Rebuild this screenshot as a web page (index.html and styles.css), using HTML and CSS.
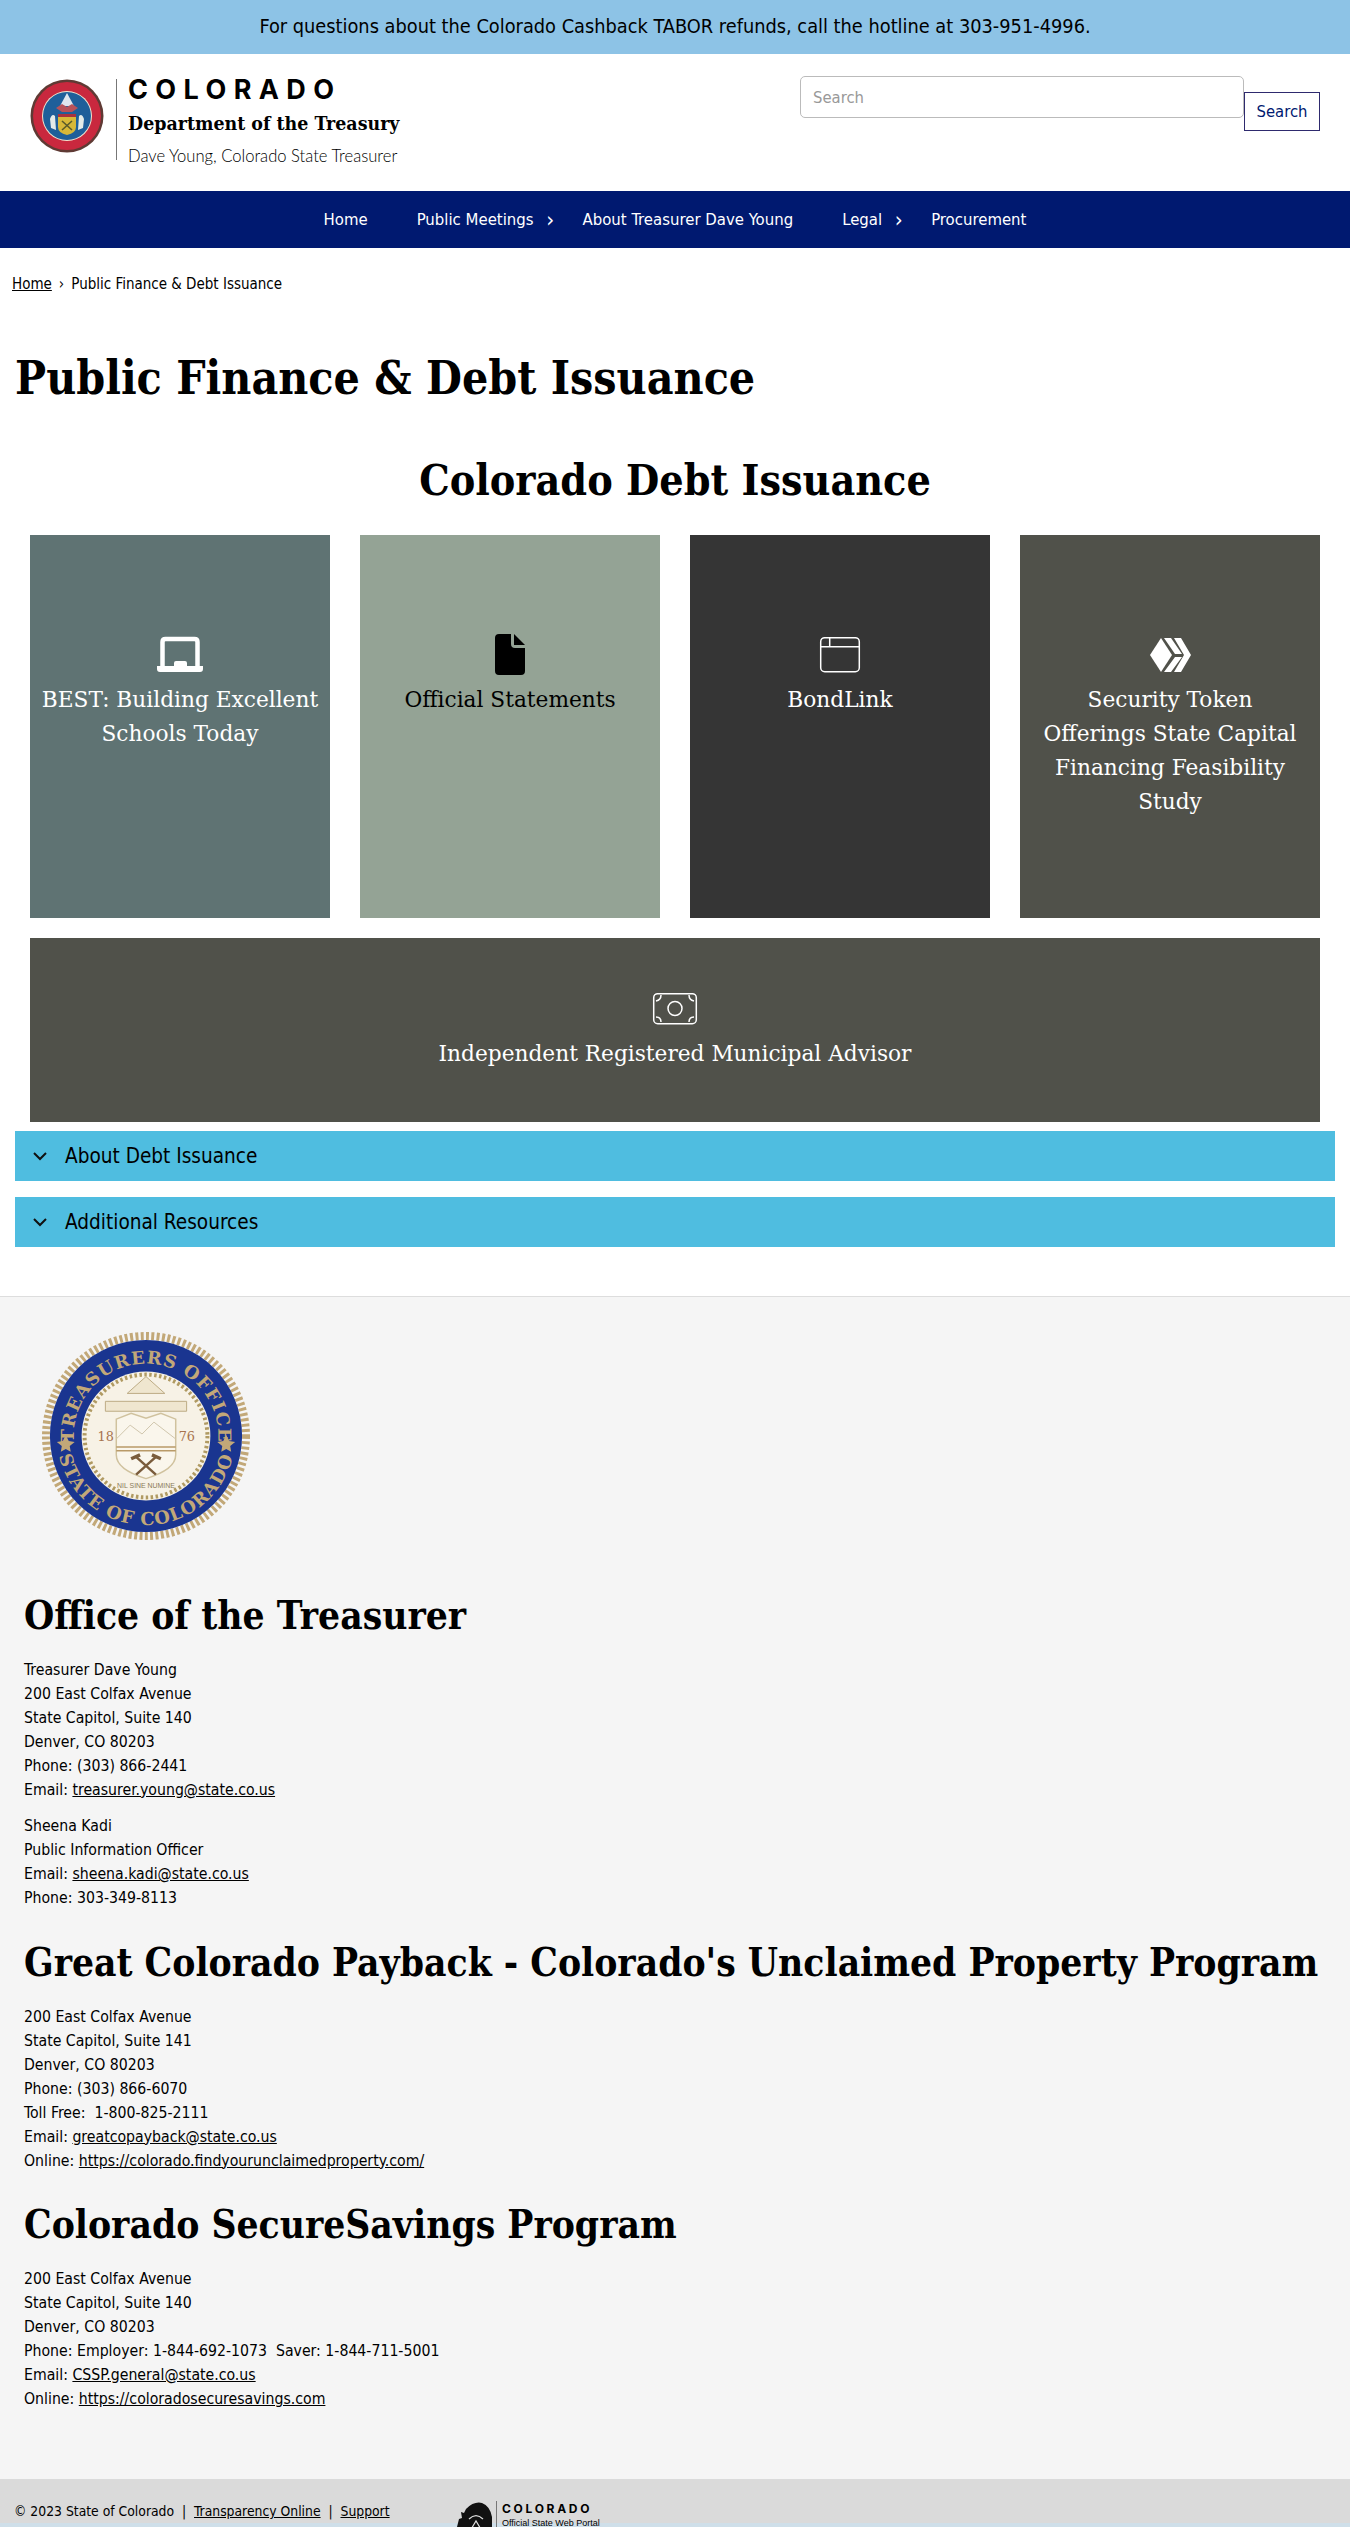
FILE: index.html
```html
<!DOCTYPE html>
<html lang="en">

<head>
    <meta charset="UTF-8">
    <title>Public Finance &amp; Debt Issuance</title>
    <link rel="stylesheet" href="styles.css">
</head>

<body>
    <div class="alert">For questions about the Colorado Cashback TABOR refunds, call the hotline at 303-951-4996.</div>

    <header class="site-header">
        <a class="brand" href="#">
            <svg class="brand-seal" viewBox="0 0 74 74" aria-hidden="true">
                <circle cx="37" cy="37" r="36.5" fill="#5f3a34"/>
                <circle cx="37" cy="37" r="34" fill="#c9283e"/>
                <circle cx="37" cy="37" r="25" fill="#f0e6d0"/>
                <circle cx="37" cy="37" r="24" fill="#1f5f9a"/>
                <path d="M37 14l7 13H30z" fill="#dfe6ee"/>
                <path d="M26 29l6-4 5 3 5-3 6 4-6 4H32z" fill="#b8525a"/>
                <path d="M28 35h18v3H28z" fill="#a8323e"/>
                <path d="M28 38h18v10q0 6-9 8-9-2-9-8z" fill="#d8b838"/>
                <path d="M32 42l10 9M42 42l-10 9" stroke="#5a5a2a" stroke-width="1.6"/>
                <path d="M20 40q2-6 5-3l1 14-5-2zM54 40q-2-6-5-3l-1 14 5-2z" fill="#e4ebe8"/>
            </svg>
            <span class="brand-rule"></span>
            <span class="brand-text">
                <span class="brand-state">COLORADO</span>
                <span class="brand-dept">Department of the Treasury</span>
                <span class="brand-name">Dave Young, Colorado State Treasurer</span>
            </span>
        </a>
        <form class="search">
            <input class="search-input" type="text" placeholder="Search">
            <button class="search-button" type="button">Search</button>
        </form>
    </header>

    <nav class="main-nav">
        <a href="#">Home</a>
        <a class="has-sub" href="#">Public Meetings</a>
        <a href="#">About Treasurer Dave Young</a>
        <a class="has-sub" href="#">Legal</a>
        <a href="#">Procurement</a>
    </nav>

    <div class="breadcrumb"><a href="#">Home</a><span class="crumb-sep">›</span>Public Finance &amp; Debt Issuance</div>

    <h1 class="page-title">Public Finance &amp; Debt Issuance</h1>
    <h2 class="section-title">Colorado Debt Issuance</h2>

    <div class="cards">
        <a class="card card-slate" href="#">
            <svg class="card-icon" viewBox="0 0 46 44" aria-hidden="true">
                <path d="M5.5 34V10q0-3 3-3h29q3 0 3 3v24" fill="none" stroke="#fff" stroke-width="4.5"/>
                <path d="M0 34h17v-3q0-2 2-2h9q2 0 2 2v3h16v3q0 3-3 3H3q-3 0-3-3z" fill="#fff"/>
            </svg>
            <span>BEST: Building Excellent<br>Schools Today</span>
        </a>
        <a class="card card-sage card-dark-text" href="#">
            <svg class="card-icon" viewBox="0 0 46 44" aria-hidden="true">
                <path d="M12 2h12v10q0 4 4 4h10v23q0 4-4 4H12q-4 0-4-4V6q0-4 4-4z" fill="#000"/>
                <path d="M27 2l11 11H27z" fill="#000"/>
            </svg>
            <span>Official Statements</span>
        </a>
        <a class="card card-charcoal" href="#">
            <svg class="card-icon" viewBox="0 0 46 44" aria-hidden="true">
                <rect x="3.7" y="5.7" width="38.6" height="34" rx="4" fill="none" stroke="#fff" stroke-width="1.5"/>
                <path d="M3 14.7h40M12.7 5v9.7" stroke="#fff" stroke-width="1.5"/>
            </svg>
            <span>BondLink</span>
        </a>
        <a class="card card-olive" href="#">
            <svg class="card-icon" viewBox="0 0 46 44" aria-hidden="true">
                <path d="M3 23L14 6l11 17-11 17z" fill="#fff"/>
                <path d="M17 6h7l11 16h-7zM28 25h7L24 40h-7z" fill="#fff"/>
                <path d="M27 6h7l10 17-10 17h-7l10-17z" fill="#fff"/>
            </svg>
            <span>Security Token<br>Offerings State Capital<br>Financing Feasibility<br>Study</span>
        </a>
        <a class="card card-wide card-olive" href="#">
            <svg class="card-icon" viewBox="0 0 46 44" aria-hidden="true">
                <rect x="1.7" y="7.7" width="42.6" height="30" rx="4" fill="none" stroke="#fff" stroke-width="1.5"/>
                <circle cx="23" cy="22.5" r="7" fill="none" stroke="#fff" stroke-width="1.5"/>
                <path d="M4 15q5-1 5-6M42 15q-5-1-5-6M4 31q5 0 5 5M42 31q-5 0-5 5" fill="none" stroke="#fff" stroke-width="1.5"/>
            </svg>
            <span>Independent Registered Municipal Advisor</span>
        </a>
    </div>

    <div class="accordion">
        <div class="accordion-item">
            <svg class="accordion-chevron" viewBox="0 0 14 10" aria-hidden="true"><path d="M1 2l6 6 6-6" fill="none" stroke="#111" stroke-width="2"/></svg>
            About Debt Issuance
        </div>
        <div class="accordion-item">
            <svg class="accordion-chevron" viewBox="0 0 14 10" aria-hidden="true"><path d="M1 2l6 6 6-6" fill="none" stroke="#111" stroke-width="2"/></svg>
            Additional Resources
        </div>
    </div>

    <footer class="site-footer">
        <svg class="footer-seal" viewBox="0 0 210 210" aria-hidden="true">
            <defs>
                <path id="seal-top" d="M32 105a73 73 0 0 1 146 0"/>
                <path id="seal-bottom" d="M15 105a90 90 0 0 0 180 0"/>
            </defs>
            <circle cx="105" cy="105" r="101" fill="none" stroke="#c2a878" stroke-width="8" stroke-dasharray="3 2.4"/>
            <circle cx="105" cy="105" r="97" fill="#1a3590"/>
            <circle cx="105" cy="105" r="65" fill="#f7f2e6"/>
            <circle cx="105" cy="105" r="62" fill="none" stroke="#b09a62" stroke-width="4" stroke-dasharray="2.5 2.5"/>
            <text class="seal-ring-text"><textPath href="#seal-top" startOffset="50%" text-anchor="middle">TREASURERS OFFICE</textPath></text>
            <text class="seal-ring-text"><textPath href="#seal-bottom" startOffset="50%" text-anchor="middle">STATE OF COLORADO</textPath></text>
            <path d="M24 112l3 6 6 1-5 4 1 6-5-3-5 3 1-6-5-4 6-1zM186 112l3 6 6 1-5 4 1 6-5-3-5 3 1-6-5-4 6-1z" fill="#c2a878" transform="translate(0 -8)"/>
            <path d="M86 62l19-17 19 17zM64 70h82v10H64z" fill="#efe6cf" stroke="#bcab84"/>
            <path d="M75 88l15-6 15 5 15-5 15 6v36q0 15-30 24-30-9-30-24z" fill="#faf6ec" stroke="#d0c29e" stroke-width="1.5"/>
            <path d="M75 108l14-14 12 9 12-12 22 17" fill="none" stroke="#cfc5ac"/>
            <path d="M75 116h60M75 120h60" stroke="#b99a68" stroke-width="1.5"/>
            <path d="M95 126l20 18M115 126l-20 18" stroke="#7a5c3c" stroke-width="2.5"/>
            <path d="M90 128l9-4M120 128l-9-4" stroke="#7a5c3c" stroke-width="3.5"/>
            <text class="seal-year" x="56" y="110">18</text>
            <text class="seal-year" x="138" y="110">76</text>
            <text class="seal-motto" x="105" y="158" text-anchor="middle">NIL SINE NUMINE</text>
        </svg>

        <h2 class="footer-heading footer-heading-first">Office of the Treasurer</h2>
        <p class="footer-text">Treasurer Dave Young<br>200 East Colfax Avenue<br>State Capitol, Suite 140<br>Denver, CO 80203<br>Phone: (303) 866-2441<br>Email: <a href="#">treasurer.young@state.co.us</a></p>
        <p class="footer-text footer-text-next">Sheena Kadi<br>Public Information Officer<br>Email: <a href="#">sheena.kadi@state.co.us</a><br>Phone: 303-349-8113</p>

        <h2 class="footer-heading">Great Colorado Payback - Colorado's Unclaimed Property Program</h2>
        <p class="footer-text">200 East Colfax Avenue<br>State Capitol, Suite 141<br>Denver, CO 80203<br>Phone: (303) 866-6070<br>Toll Free:&nbsp; 1-800-825-2111<br>Email: <a href="#">greatcopayback@state.co.us</a><br>Online: <a href="#">https://colorado.findyourunclaimedproperty.com/</a></p>

        <h2 class="footer-heading">Colorado SecureSavings Program</h2>
        <p class="footer-text">200 East Colfax Avenue<br>State Capitol, Suite 140<br>Denver, CO 80203<br>Phone: Employer: 1-844-692-1073&nbsp; Saver: 1-844-711-5001<br>Email: <a href="#">CSSP.general@state.co.us</a><br>Online: <a href="#">https://coloradosecuresavings.com</a></p>
    </footer>

    <div class="legal-bar">
        <div class="legal-links">© 2023 State of Colorado&nbsp; |&nbsp; <a href="#">Transparency Online</a>&nbsp; |&nbsp; <a href="#">Support</a></div>
        <div class="portal-logo">
            <svg class="portal-mark" viewBox="0 0 36 30" aria-hidden="true">
                <path d="M0 30l3-12 3-1-1-6 3 1 2-4q8-8 16-6 8 3 10 14v14H0z" fill="#111"/>
                <path d="M14 30l6-10 6 10M13 18q7-7 14 0" fill="none" stroke="#ddd" stroke-width="1.2"/>
            </svg>
            <div class="portal-text">
                <span class="portal-state">COLORADO</span>
                <span class="portal-sub">Official State Web Portal</span>
            </div>
        </div>
    </div>
</body>

</html>
```

FILE: styles.css
```css
html,
body {
    height: 2527px;
    overflow: hidden;
}

body {
    margin: 0;
    background-color: #fff;
    color: #000;
    font-family: "DejaVu Sans Condensed", "DejaVu Sans", sans-serif;
    font-size: 15.7px;
}

a {
    color: inherit;
}

.alert {
    height: 54px;
    line-height: 54px;
    background-color: #8dc3e6;
    font-size: 19.8px;
    text-align: center;
}

.site-header {
    height: 137px;
    display: flex;
    justify-content: space-between;
    box-sizing: border-box;
    padding: 22px 30px 0;
}

.brand {
    display: flex;
    align-items: flex-start;
    text-decoration: none;
    padding-top: 3px;
}

.brand-seal {
    width: 74px;
    height: 74px;
}

.brand-rule {
    width: 1px;
    height: 81px;
    margin: 0 11px 0 12px;
    background-color: #777;
}

.brand-text {
    display: flex;
    flex-direction: column;
}

.brand-state {
    font-family: "Inter", sans-serif;
    font-size: 27px;
    font-weight: 700;
    letter-spacing: 7.4px;
    line-height: 22px;
}

.brand-dept {
    margin-top: 11px;
    font-family: "DejaVu Serif Condensed", "DejaVu Serif", serif;
    font-size: 19.4px;
    font-weight: 700;
    line-height: 24px;
}

.brand-name {
    margin-top: 9px;
    font-family: "Lato", sans-serif;
    font-size: 16.6px;
    font-weight: 300;
    line-height: 22px;
}

.search {
    display: flex;
    align-items: flex-start;
}

.search-input {
    width: 444px;
    height: 42px;
    box-sizing: border-box;
    padding: 0 12px;
    border: 1px solid #bbb;
    border-radius: 5px;
    font-family: inherit;
    font-size: 16.5px;
}

.search-input::placeholder {
    color: #999;
}

.search-button {
    width: 76px;
    height: 39px;
    margin-top: 16px;
    border: 1px solid #2e2a6e;
    background-color: #fff;
    color: #001970;
    font-family: inherit;
    font-size: 16.5px;
}

.main-nav {
    height: 57px;
    display: flex;
    justify-content: center;
    align-items: center;
    background-color: #001970;
}

.main-nav a {
    padding: 0 24.5px;
    color: #fff;
    font-size: 16.6px;
    text-decoration: none;
}

.main-nav .has-sub {
    position: relative;
}

.main-nav .has-sub::after {
    content: "›";
    position: absolute;
    right: 4px;
    top: -3px;
    font-size: 22px;
}

.breadcrumb {
    margin: 26px 0 0 12px;
    line-height: 20px;
    font-size: 15px;
}

.crumb-sep {
    margin: 0 7px;
}

.page-title {
    margin: 54px 0 0 15px;
    font-family: "DejaVu Serif Condensed", "DejaVu Serif", serif;
    font-size: 46px;
    font-weight: 700;
    line-height: 60px;
}

.section-title {
    margin: 45px 0 0;
    font-family: "DejaVu Serif Condensed", "DejaVu Serif", serif;
    font-size: 42.6px;
    font-weight: 700;
    line-height: 54px;
    text-align: center;
}

.cards {
    display: flex;
    flex-wrap: wrap;
    gap: 20px 30px;
    margin: 28px 30px 0;
}

.card {
    width: 300px;
    height: 383px;
    box-sizing: border-box;
    display: flex;
    flex-direction: column;
    align-items: center;
    padding: 97px 5px 0;
    color: #fff;
    font-family: "DejaVu Serif", serif;
    font-size: 21.7px;
    line-height: 34px;
    text-align: center;
    text-decoration: none;
}

.card-icon {
    width: 46px;
    height: 44px;
    margin-bottom: 7px;
}

.card-slate {
    background-color: #5f7373;
}

.card-sage {
    background-color: #94a395;
}

.card-dark-text {
    color: #000;
}

.card-charcoal {
    background-color: #353535;
}

.card-olive {
    background-color: #50514a;
}

.card-wide {
    width: 100%;
    height: 184px;
    padding-top: 48px;
}

.accordion {
    margin: 9px 15px 0;
}

.accordion-item {
    height: 50px;
    display: flex;
    align-items: center;
    margin-bottom: 16px;
    background-color: #4fbde0;
    font-size: 20.6px;
}

.accordion-chevron {
    width: 14px;
    height: 10px;
    margin: 0 18px 0 18px;
}

.site-footer {
    margin-top: 49px;
    height: 1183px;
    box-sizing: border-box;
    padding: 35px 24px 0;
    border-top: 1px solid #ddd;
    background-color: #f5f5f5;
}

.footer-seal {
    display: block;
    width: 208px;
    height: 208px;
    margin-left: 18px;
}

.seal-ring-text {
    fill: #c2a878;
    font-family: "DejaVu Serif", serif;
    font-size: 18px;
    font-weight: 700;
    letter-spacing: 1px;
}

.seal-year {
    fill: #a8744e;
    font-family: "DejaVu Serif", serif;
    font-size: 13px;
}

.seal-motto {
    fill: #8a7a58;
    font-family: "Liberation Sans", sans-serif;
    font-size: 7px;
}

.footer-heading {
    margin: 28.5px 0 0;
    font-family: "DejaVu Serif Condensed", "DejaVu Serif", serif;
    font-size: 38.6px;
    font-weight: 700;
    line-height: 48px;
    white-space: nowrap;
}

.footer-heading-first {
    margin-top: 52px;
}

.footer-text {
    margin: 18px 0 0;
    line-height: 24px;
}

.footer-text-next {
    margin-top: 12px;
}

.legal-bar {
    height: 49px;
    display: flex;
    align-items: flex-start;
    background-image: linear-gradient(#dadada 44px, #cfdfe9 44px);
    padding: 22px 0 0 14px;
    box-sizing: border-box;
    overflow: hidden;
}

.legal-links {
    width: 442px;
    font-size: 13.8px;
    line-height: 20px;
}

.portal-logo {
    display: flex;
    align-items: flex-start;
}

.portal-mark {
    width: 36px;
    height: 30px;
    margin-right: 4px;
}

.portal-text {
    display: flex;
    flex-direction: column;
    padding-left: 5px;
    border-left: 1px solid #777;
}

.portal-state {
    font-family: "Inter", sans-serif;
    font-size: 12px;
    font-weight: 700;
    letter-spacing: 2.7px;
    line-height: 16px;
}

.portal-sub {
    font-family: "Liberation Sans", sans-serif;
    font-size: 9px;
    line-height: 12px;
}
```
